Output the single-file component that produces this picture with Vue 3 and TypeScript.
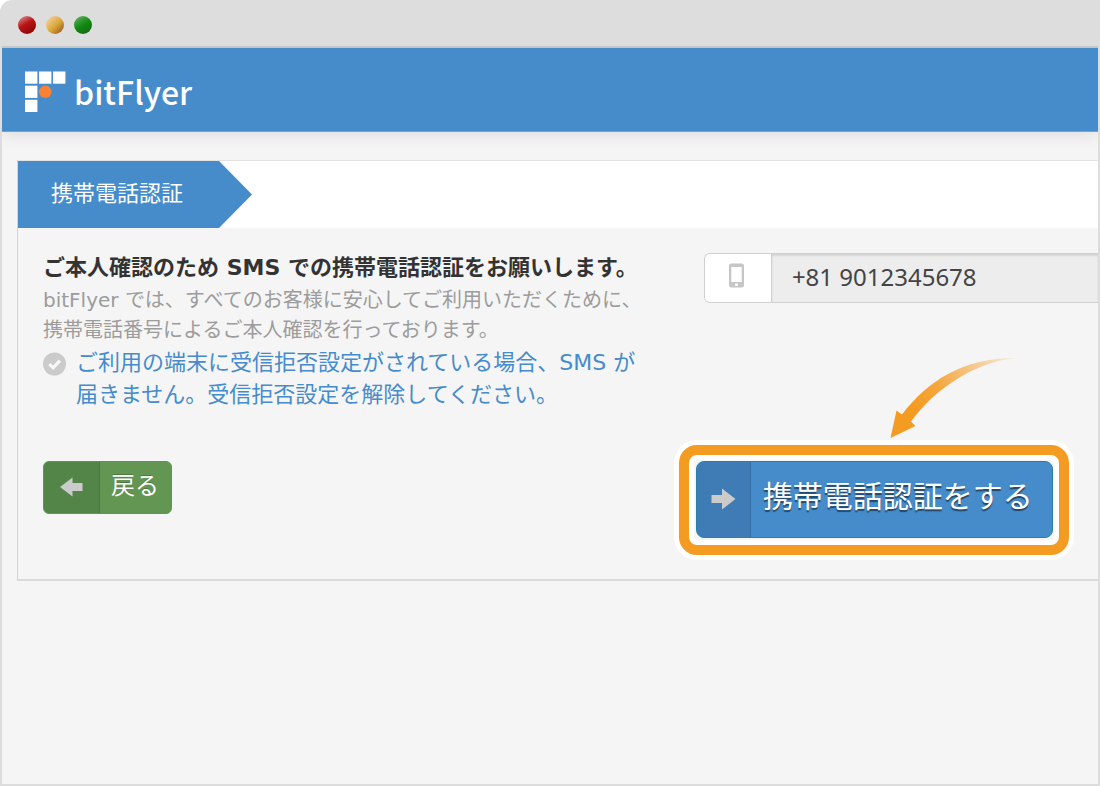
<script setup lang="ts">
import { ref } from 'vue'

const phone = ref<string>('+81 9012345678')
const lights: string[] = ['red', 'yellow', 'green']
</script>

<template>
  <div class="window">
    <header class="titlebar">
      <span v-for="light in lights" :key="light" class="light" :class="light"></span>
    </header>
    <div class="page">
      <nav class="navbar">
        <a class="brand" href="#">
          <svg class="mark" width="41" height="41" viewBox="0 0 41 41" aria-hidden="true">
            <g fill="#fff">
              <rect x="0" y="0.5" width="12.4" height="12.2" />
              <rect x="14" y="0.5" width="12.4" height="12.2" />
              <rect x="28" y="0.5" width="12.4" height="12.2" />
              <rect x="0" y="14.7" width="12.4" height="12.2" />
              <rect x="0" y="28.8" width="12.4" height="12.2" />
            </g>
            <circle cx="20.3" cy="20.8" r="6.2" fill="#fb8232" />
          </svg>
          <span class="brand-name">bitFlyer</span>
        </a>
      </nav>
      <main class="panel">
        <div class="steps">
          <h1 class="step">携帯電話認証</h1>
        </div>
        <form class="body" @submit.prevent>
          <div class="copy">
            <h2 class="lead">ご本人確認のため SMS での携帯電話認証をお願いします。</h2>
            <p class="detail">
              bitFlyer では、すべてのお客様に安心してご利用いただくために、<br />携帯電話番号によるご本人確認を行っております。
            </p>
            <p class="note">
              <svg class="check" width="24" height="24" viewBox="0 0 24 24" aria-hidden="true">
                <circle cx="11.5" cy="12" r="11.5" fill="#cbcbcb" />
                <path d="M6.3 12.2 10.1 15.8 16.9 8.6" fill="none" stroke="#f8f8f8" stroke-width="3.2" />
              </svg>
              <span>ご利用の端末に受信拒否設定がされている場合、SMS が<br />届きません。受信拒否設定を解除してください。</span>
            </p>
          </div>
          <div class="field">
            <label class="field-icon" for="phone" aria-label="携帯電話番号">
              <svg width="15" height="25" viewBox="0 0 15 25" aria-hidden="true">
                <rect x="0" y="0.5" width="15" height="24" rx="2.5" fill="#c6c6c6" />
                <rect x="2.3" y="4" width="10.4" height="15" fill="#fff" />
                <rect x="6" y="20.5" width="3" height="2.5" rx="1" fill="#fff" />
              </svg>
            </label>
            <input id="phone" v-model="phone" class="field-input" type="tel" readonly />
          </div>
          <div class="back-cell">
            <button class="btn back" type="button">
              <span class="btn-icon">
                <svg width="23" height="20" viewBox="0 0 23 20" aria-hidden="true">
                  <path d="M0 10 12.5 0.5V6H22.5V14H12.5V19.5Z" fill="#cbcbcb" />
                </svg>
              </span>
              <span class="btn-text">戻る</span>
            </button>
          </div>
          <div class="submit-cell">
            <button class="btn submit" type="submit">
              <span class="btn-icon">
                <svg width="25" height="22" viewBox="0 0 25 22" aria-hidden="true">
                  <path d="M24.5 11 11 0.5V7H0.5V15H11V21.5Z" fill="#cbcbcb" />
                </svg>
              </span>
              <span class="btn-text">携帯電話認証をする</span>
            </button>
            <svg class="pointer" width="126" height="82" viewBox="0 0 126 82" aria-hidden="true">
              <defs>
                <linearGradient id="fade" gradientUnits="userSpaceOnUse" x1="28" y1="60" x2="122" y2="0">
                  <stop offset="0" stop-color="#f49b22" />
                  <stop offset="0.3" stop-color="#f5a63c" />
                  <stop offset="1" stop-color="#f5a63c" stop-opacity="0.15" />
                </linearGradient>
              </defs>
              <path
                d="M0.5 81 6.5 53.5 12 57.5C38 24 72 1 126 1C84 5 44 33 21 64.5L25.5 69Z"
                fill="url(#fade)"
              />
            </svg>
          </div>
        </form>
      </main>
    </div>
  </div>
</template>

<style>
body {
  margin: 0;
  background: #fff;
}
</style>

<style scoped>
.window {
  box-sizing: border-box;
  min-height: 100vh;
  display: flex;
  flex-direction: column;
  padding: 0 2px 2px;
  background: #dddddd;
  border-radius: 12px 0 0 0;
  overflow: hidden;
  font-family: 'DejaVu Sans', 'Noto Sans CJK JP', sans-serif;
}

.titlebar {
  box-sizing: border-box;
  height: 48px;
  display: flex;
  align-items: center;
  gap: 10px;
  padding: 4px 16px 0;
  border-bottom: 2px solid #c6c6c6;
}

.light {
  width: 18px;
  height: 18px;
  border-radius: 50%;
}

.red {
  background: linear-gradient(150deg, #d89090 5%, #b81414 45%, #8c0606 90%);
}

.yellow {
  background: linear-gradient(135deg, #f6cfa0 10%, #d9a634 55%, #96502c 95%);
}

.green {
  background: linear-gradient(150deg, #62b062 5%, #108a10 50%, #1c641c 95%);
}

.page {
  flex: 1;
  background: #f5f5f5;
  overflow: hidden;
}

.navbar {
  box-sizing: border-box;
  height: 84px;
  padding: 23px 23px 0;
  background: #468ccb;
  border-bottom: 1px solid #6fa5d6;
  box-shadow: 0 3px 16px rgba(0, 0, 0, 0.1);
}

.brand {
  display: inline-flex;
  align-items: center;
  gap: 8px;
  color: #fff;
  text-decoration: none;
}

.brand-name {
  font-family: 'Noto Sans CJK JP', sans-serif;
  font-size: 32px;
  font-weight: 500;
  line-height: 41px;
}

.panel {
  margin: 28px 0 24px 15px;
  border: 1px solid #d4d4d4;
  border-top-color: #e2e2e2;
  border-right: 0;
  border-bottom: 2px solid #dadada;
}

.steps {
  background: #fff;
}

.step {
  box-sizing: border-box;
  width: 234px;
  margin: 0;
  padding: 0 0 2px 33px;
  background: #468ccb;
  clip-path: polygon(0 0, 201px 0, 100% 50%, 201px 100%, 0 100%);
  color: #fff;
  font-size: 22px;
  font-weight: 400;
  line-height: 65px;
}

.body {
  display: grid;
  grid-template-columns: 5fr 3fr;
  column-gap: 4px;
  row-gap: 50px;
  padding: 23px 0 41px 25px;
}

.copy {
  min-width: 0;
  white-space: nowrap;
}

.lead {
  margin: 0;
  color: #333;
  font-size: 22px;
  font-weight: 700;
  line-height: 34px;
}

.detail {
  margin: 0;
  color: #9c9c9c;
  font-size: 20px;
  line-height: 30px;
}

.note {
  display: flex;
  gap: 9px;
  margin: 2px 0 0;
  color: #468ccb;
  font-size: 22px;
  line-height: 32px;
}

.check {
  flex: none;
  margin-top: 5px;
}

.field {
  box-sizing: border-box;
  display: flex;
  height: 50px;
  margin-top: 2px;
  border: 1px solid #cfcfcf;
  border-right: 0;
  border-radius: 6px 0 0 6px;
  overflow: hidden;
}

.field-icon {
  box-sizing: border-box;
  flex: none;
  width: 67px;
  display: flex;
  align-items: center;
  justify-content: center;
  padding: 0 2px 6px 0;
  background: #fff;
  border-right: 1px solid #cfcfcf;
}

.field-input {
  flex: 1;
  min-width: 0;
  margin: 0;
  padding: 0 20px 3px;
  border: 0;
  outline: 0;
  background: #ededed;
  box-shadow: inset 0 2px 2px rgba(0, 0, 0, 0.1);
  color: #444;
  font-family: 'Noto Sans', sans-serif;
  font-size: 24px;
}

.btn {
  display: flex;
  align-items: stretch;
  box-sizing: border-box;
  margin: 0;
  padding: 0;
  color: #fff;
  font-family: 'Noto Sans CJK JP', sans-serif;
  cursor: pointer;
}

.btn-icon {
  display: flex;
  align-items: center;
  justify-content: center;
  padding-bottom: 2px;
}

.back {
  width: 129px;
  height: 53px;
  border: 1px solid #5c9650;
  border-radius: 6px;
  background: #629652;
  font-size: 24px;
  line-height: 44px;
}

.back .btn-icon {
  width: 55px;
  background: #548548;
  border-right: 1px solid #467a3c;
  border-radius: 5px 0 0 5px;
}

.back .btn-text {
  padding-left: 11px;
  text-shadow: 0 -1px 0 rgba(0, 0, 0, 0.2);
}

.submit-cell {
  position: relative;
  margin-left: -8px;
}

.submit {
  position: relative;
  width: 357px;
  height: 77px;
  border: 1px solid #2c7fa4;
  border-radius: 8px;
  background: #468ccb;
  font-size: 30px;
  line-height: 64px;
}

.submit::before {
  content: '';
  position: absolute;
  inset: -17px -17px -18px -18px;
  border: 10px solid #f49b22;
  border-radius: 18px;
  box-shadow: 0 0 0 5px #fff, inset 0 0 0 5px #fff;
}

.submit .btn-icon {
  width: 53px;
  background: #3f7cb5;
  border-right: 1px solid #356ea5;
  border-radius: 7px 0 0 7px;
}

.submit .btn-text {
  padding-left: 12px;
  text-shadow: 0 2px 1px rgba(0, 0, 0, 0.5);
}

.pointer {
  position: absolute;
  left: 194px;
  top: -104px;
}
</style>
